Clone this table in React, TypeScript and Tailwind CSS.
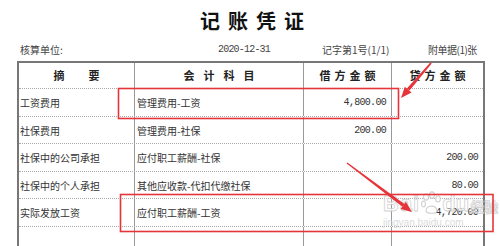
import React from "react";

const cjk = { fontFamily: '"Noto Sans CJK SC", "Noto Sans", sans-serif' };
const mono = { fontFamily: '"Liberation Mono", "Noto Sans CJK SC", monospace' };
const latin = { fontFamily: '"Liberation Sans", sans-serif' };

interface Row {
  summary: string;
  subject: string;
  debit?: string;
  credit?: string;
  h: string;
}

const rows: Row[] = [
  { summary: "工资费用", subject: "管理费用-工资", debit: "4,800.00", h: "h-[28px]" },
  { summary: "社保费用", subject: "管理费用-社保", debit: "200.00", h: "h-[27px]" },
  { summary: "社保中的公司承担", subject: "应付职工薪酬-社保", credit: "200.00", h: "h-[28px]" },
  { summary: "社保中的个人承担", subject: "其他应收款-代扣代缴社保", credit: "80.00", h: "h-[27px]" },
  { summary: "实际发放工资", subject: "应付职工薪酬-工资", credit: "4,720.00", h: "h-[28px]" },
  { summary: "", subject: "", h: "h-[28px]" },
];

const Chars = ({ text, gap }: { text: string; gap: string }) => (
  <div className={`flex items-center justify-center ${gap}`}>
    {text.split("").map((c, i) => (
      <span key={i}>{c}</span>
    ))}
  </div>
);

// red boxes + arrows drawn over the voucher
const Annotations = () => (
  <svg className="absolute left-0 top-0 pointer-events-none" width="500" height="246" viewBox="0 0 500 246">
    <rect x="118.5" y="88.5" width="280" height="30" fill="none" stroke="#e5353b" strokeWidth="1.6" />
    <rect x="120.5" y="194.5" width="372.5" height="37" fill="none" stroke="#e5353b" strokeWidth="1.6" />
    <polygon points="430.3,62.6 431.7,63.4 409.6,90.6 406.8,88.6" fill="#e5353b" />
    <polygon points="401,98 411.6,92.6 404.8,86.7" fill="#e5353b" />
    <polygon points="346.6,163.6 347.4,162.4 404.4,204 402.4,206.8" fill="#e5353b" />
    <polygon points="412,212 400.5,209 405.9,201.8" fill="#e5353b" />
  </svg>
);

const Watermark = () => (
  <div className="absolute left-[383px] top-[191px] flex flex-col pointer-events-none opacity-80" style={cjk}>
    <div className="flex items-end text-white font-bold leading-none [-webkit-text-stroke:0.8px_#c8c8c8]">
      <span className="text-[22px] tracking-[1px]" style={latin}>Bai</span>
      <svg width="20" height="24" viewBox="0 0 20 24" className="mx-[1px]">
        <g fill="#fff" stroke="#c8c8c8" strokeWidth="1.2">
          <ellipse cx="5" cy="6" rx="2.5" ry="3.2" />
          <ellipse cx="11" cy="4" rx="2.5" ry="3.2" />
          <ellipse cx="17" cy="8" rx="2.3" ry="3" />
          <ellipse cx="2.5" cy="13" rx="2" ry="2.8" />
          <path d="M5 20 C 5 14, 15 13, 16 20 C 16 23, 6 23, 5 20 Z" />
        </g>
      </svg>
      <span className="text-[22px]" style={latin}>du</span>
      <span className="text-[14px] ml-[1px] mb-[2px]">经验</span>
    </div>
    <span className="text-[10px] text-[#d4d4d4] leading-none mt-[3px]" style={latin}>
      jingyan.baidu.com
    </span>
  </div>
);

export default function App() {
  return (
    <div className="relative w-[500px] h-[246px] overflow-hidden bg-white text-[#333]" style={cjk}>
      <div className="flex justify-center pt-[10px] pl-[12px] h-[40px]">
        <span className="text-[20px] leading-[22px] font-bold tracking-[8px] text-[#111]">记账凭证</span>
      </div>

      <div className="flex items-center h-[19px] text-[10px] leading-none text-[#444]">
        <span className="ml-[20px] w-[198px]">核算单位:</span>
        <span className="w-[104px] tracking-[-0.8px]" style={mono}>2020-12-31</span>
        <span className="w-[106px]">记字第1号(1/1)</span>
        <span className="tracking-[-0.5px]">附单据(1)张</span>
      </div>

      <div className="ml-[17px] mt-[2px] w-[468px] border-2 border-b-0 border-[#777] text-[10px]">
        <div className="grid grid-cols-[116px_169px_88px_91px] h-[26px] border-b border-dotted border-[#aaa] font-bold text-[11px] text-[#222]">
          <div className="border-r border-[#999] flex items-center justify-center">
            <Chars text="摘要" gap="gap-[24px]" />
          </div>
          <div className="border-r border-[#999] flex items-center justify-center">
            <Chars text="会计科目" gap="gap-[9px]" />
          </div>
          <div className="border-r border-[#999] flex items-center justify-center">
            <Chars text="借方金额" gap="gap-[4px]" />
          </div>
          <div className="flex items-center justify-center">
            <Chars text="贷方金额" gap="gap-[4px]" />
          </div>
        </div>

        {rows.map((r, i) => (
          <div
            key={i}
            className={`grid grid-cols-[116px_169px_88px_91px] ${r.h} border-b border-dotted border-[#aaa]`}
          >
            <div className="border-r border-[#999] flex items-center pl-[1px]">{r.summary}</div>
            <div className="border-r border-[#999] flex items-center pl-[2px]">{r.subject}</div>
            <div
              className="border-r border-[#999] flex items-center justify-end pr-[5px] tracking-[-0.7px]"
              style={mono}
            >
              {r.debit}
            </div>
            <div className="flex items-center justify-end pr-[5px] tracking-[-0.7px]" style={mono}>
              {r.credit}
            </div>
          </div>
        ))}
      </div>

      <Watermark />
      <Annotations />
    </div>
  );
}
